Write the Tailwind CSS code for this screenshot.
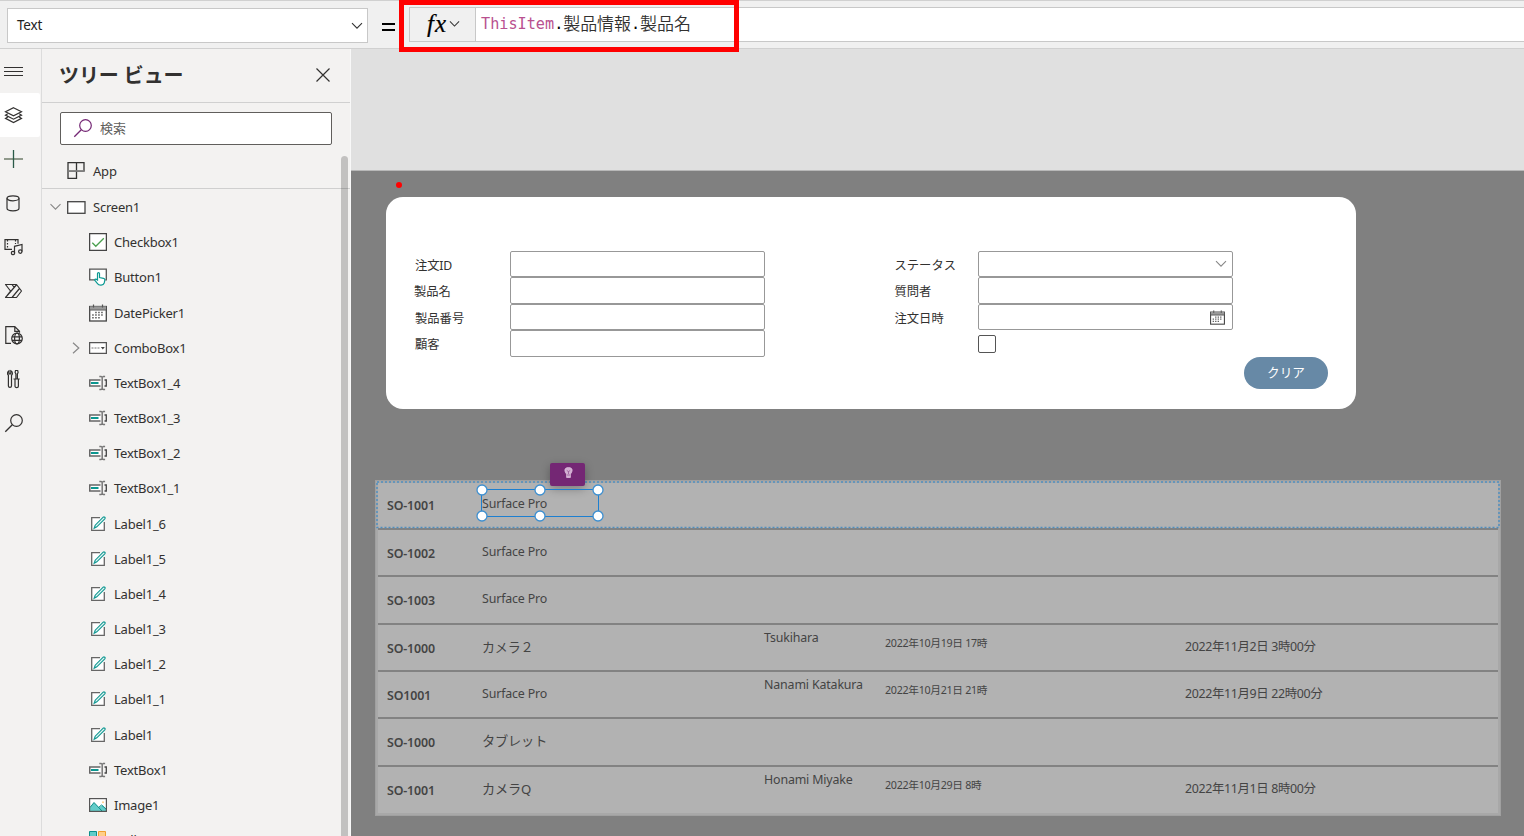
<!DOCTYPE html>
<html lang="ja">
<head>
<meta charset="utf-8">
<title>Power Apps Studio</title>
<script src="https://cdn.jsdelivr.net/npm/@tailwindcss/browser@4"></script>
</head>
<body class="w-[1524px] h-[836px] overflow-hidden bg-[#808080] font-['Noto_Sans','Noto_Sans_CJK_JP',sans-serif] text-[#323130] relative flex flex-col">

<svg class="hidden" xmlns="http://www.w3.org/2000/svg">
  <symbol id="i-textbox" viewBox="0 0 18 16">
    <path d="M11.500 5H.75v6H11.500" fill="#fff" stroke="#666" stroke-width="1.500"/>
    <rect x="2" y="7" width="7.500" height="2" fill="#0b968f"/>
    <path d="M15.500 5h1.800v6h-1.800" fill="none" stroke="#444" stroke-width="1.300"/>
    <path d="M10.300 1.500h1.700l1.200.9 1.200-.9h1.700M10.300 14.500h1.700l1.200-.9 1.200.9h1.700M13.200 2v12" fill="none" stroke="#777" stroke-width="1.500"/>
  </symbol>
  <symbol id="i-label" viewBox="0 0 18 16">
    <path d="M11 1.800H2.700v12.500h12.600V6.500" fill="#fff"/>
    <path d="M11 1.700H2.700v12.600h12.600V6" fill="none" stroke="#666" stroke-width="1.300"/>
    <path d="M5.200 12.200l1-3 8-8c1-.9 2.500.6 1.600 1.600l-8 8z" fill="#e6f5f4" stroke="#159a94" stroke-width="1.200"/>
  </symbol>
  <symbol id="i-calendar" viewBox="0 0 18 18">
    <rect x=".7" y="2.500" width="16.600" height="14.500" fill="#fff" stroke="#444" stroke-width="1.300"/>
    <path d="M1 2.300h16v3.500H1z" fill="#999"/><path d="M1 6h16M4.500.5v3M13.500.5v3" stroke="#555" stroke-width="1.200"/>
    <path d="M6.200 8.500h9M3.200 11h12M3.200 13.700h9" stroke="#555" stroke-width="1.500" stroke-dasharray="1.500 1.500"/>
  </symbol>
  <symbol id="i-search" viewBox="0 0 20 20">
    <circle cx="12.500" cy="7.500" r="5.800" fill="none" stroke="currentColor" stroke-width="1.200"/>
    <path d="M8.300 11.700L1.300 18.700" stroke="currentColor" stroke-width="1.300"/>
  </symbol>
  <symbol id="i-down" viewBox="0 0 12 8">
    <path d="M1 1.200l5 5 5-5" fill="none" stroke="currentColor" stroke-width="1.100"/>
  </symbol>
</svg>

<!-- Formula bar -->
<header class="h-[49px] shrink-0 bg-[#f0f0f0] border-y border-[#d0d0d0] flex items-start pt-[6px]">
  <div class="ml-[7px] mt-px w-[361px] h-[35px] bg-white border border-[#c8c8c8] flex items-center justify-between pl-[9px] pr-[4px] text-[13.500px] text-[#222]">
    <span class="tracking-[-0.2px]">Text</span>
    <svg class="w-[12px] h-[8px] text-[#333]"><use href="#i-down"/></svg>
  </div>
  <div class="w-[41px] h-[35px] flex items-center justify-center">
    <div class="w-[13px] h-[8px] mt-[4px] border-y-2 border-black"></div>
  </div>
  <div class="w-[66px] h-[35px] border border-r-0 border-[#c8c8c8] flex items-center pl-[17px] gap-[5px]">
    <span class="font-['Liberation_Serif',serif] italic text-[25px] leading-none text-black w-[19px] -mt-[3px] tracking-[1px] [-webkit-text-stroke:0.2px_black]">fx</span>
    <svg class="w-[11px] h-[8px] text-[#333] ml-[-2px] -mt-[2px]"><use href="#i-down"/></svg>
  </div>
  <div class="flex-1 h-[35px] border border-r-0 border-[#c8c8c8] bg-white flex items-center pl-[5px] pb-px whitespace-pre text-[15.200px]">
    <span class="font-['DejaVu_Sans_Mono',monospace] text-[#b9508f]">ThisItem</span><span class="font-['DejaVu_Sans_Mono',monospace] text-black">.</span><span class="text-[17px] leading-none -mt-[4px] tracking-[-0.100px] font-['Noto_Sans_CJK_JP',sans-serif] font-[350]">製品情報</span><span class="font-['DejaVu_Sans_Mono',monospace] text-black">.</span><span class="text-[17px] leading-none -mt-[4px] tracking-[-0.100px] font-['Noto_Sans_CJK_JP',sans-serif] font-[350]">製品名</span>
  </div>
</header>

<div class="flex flex-1 min-h-0">
  <!-- Navigation rail -->
  <nav class="w-[42px] shrink-0 bg-[#f3f2f1] border-r border-[#dcdcdc] text-[#323130]">
    <div class="w-[40px] h-[44px] flex items-center pl-[4px]"><svg width="19" height="14" viewBox="0 0 19 14" stroke="currentColor"><path d="M0 3.500h19M0 7.500h19M0 11.500h19"/></svg></div>
    <div class="w-[40px] h-[44px] flex items-center pl-[4px] bg-white rounded-r-xs"><svg width="19" height="18" viewBox="0 0 19 18" fill="none" stroke="currentColor" stroke-width="1.200"><path d="M9.500 1.700L17.500 5.800 9.500 9.900 1.500 5.800z"/><path d="M3.800 7.700L1.500 9.100l8 4.100 8-4.100-2.300-1.400M3.800 10.900L1.500 12.400l8 4.100 8-4.100-2.300-1.500"/></svg></div>
    <div class="w-[40px] h-[44px] flex items-center pl-[4px]"><svg width="19" height="18" viewBox="0 0 19 18" stroke-width="1.300"><path d="M0 9h19" stroke="#5a6a55"/><path d="M9.500 0v18" stroke="#2a5a48"/></svg></div>
    <div class="w-[40px] h-[44px] flex items-center pl-[6px]"><svg width="14" height="17" viewBox="0 0 14 17" fill="none" stroke="currentColor" stroke-width="1.200"><ellipse cx="7" cy="3.300" rx="6" ry="2.500"/><path d="M1 3.300v10c0 3.400 12 3.400 12 0v-10"/></svg></div>
    <div class="w-[40px] h-[44px] flex items-center pl-[4px]"><svg width="20" height="18" viewBox="0 0 20 18" fill="none" stroke="currentColor" stroke-width="1.200"><path d="M8 11.300H1V1.700h13v4"/><path d="M3.500 2v9M11.500 2v4" stroke-dasharray="1.500 1.500"/><path d="M10.500 15V8.300l7.500-1.800V13.500"/><circle cx="9" cy="15" r="1.700"/><circle cx="16.300" cy="13.600" r="1.700"/></svg></div>
    <div class="w-[40px] h-[44px] flex items-center pl-[4px]"><svg width="19" height="16" viewBox="0 0 19 16" fill="none" stroke="currentColor" stroke-width="1.200" stroke-linejoin="round"><path d="M1.500 1.500h11L17.500 8l-5 6.500h-11L6.500 8zM8 1.500l2.500 3.300M12.300 2L1.500 14.500M15.500 5.500L8 14.500"/></svg></div>
    <div class="w-[40px] h-[44px] flex items-center pl-[5px]"><svg width="18" height="20" viewBox="0 0 18 20" fill="none" stroke="currentColor" stroke-width="1.200"><path d="M6 18.400H.8V1.600h9l4.700 4.700v1.500M9.800 1.600v4.700h4.700"/><circle cx="12" cy="13.500" r="5.300"/><ellipse cx="12" cy="13.500" rx="2.400" ry="5.300"/><path d="M7 11.800h10M7 15.300h10"/></svg></div>
    <div class="w-[40px] h-[44px] flex items-center pl-[7px]"><svg width="13" height="20" viewBox="0 0 13 20" fill="none" stroke="currentColor" stroke-width="1.200"><path d="M2 1.800v3h1.800v-3c2 1 2 3.500.7 4.600V17c0 1.900-3.100 1.900-3.100 0V6.400C.1 5.300.1 2.800 2 1.800z"/><path d="M8.500 1.500h2.200l.4 2-.7 1.500V10h1v7.300c0 1.700-3.400 1.700-3.400 0V10h.9V5l-.8-1.500zM6.500 10h6.200"/></svg></div>
    <div class="w-[40px] h-[44px] flex items-center pl-[4px]"><svg class="w-[20px] h-[20px]"><use href="#i-search"/></svg></div>
  </nav>

  <!-- Tree view -->
  <aside class="w-[309px] shrink-0 bg-[#f3f2f1] border-r border-[#f8f8f8] relative overflow-hidden">
    <div class="h-[54px] border-b border-[#d0d0d0] flex items-center justify-between pl-[17px] pr-[19px]">
      <h1 class="text-[20px] font-bold leading-none tracking-[-0.100px]">ツリー ビュー</h1>
      <svg class="-mt-[2px]" width="16" height="16" viewBox="0 0 16 16" stroke="#323130" stroke-width="1.200"><path d="M1.500 1.500l13 13M14.500 1.500l-13 13"/></svg>
    </div>
    <div class="ml-[18px] mt-[9px] w-[272px] h-[33px] bg-white border border-[#605e5c] rounded-[2px] flex items-center pl-[12px] gap-[7px]">
      <svg class="w-[20px] h-[20px] text-[#742774] -mt-[2px]"><use href="#i-search"/></svg>
      <span class="text-[13px] text-[#605e5c]">検索</span>
    </div>
    <div class="h-[44px] border-b border-[#cfcfcf] flex items-center pl-[25px] gap-[8px] text-[13px] pt-[11px]">
      <svg class="-mt-[3px]" width="18" height="17" viewBox="0 0 18 17" fill="none"><path d="M1 .7h16v8.500H1zM1 9v7.300h8.500V.7" stroke="#333" stroke-width="1.300"/><path d="M1 9h16" stroke="#888" stroke-width="1.500"/></svg>
      <span class="tracking-[-0.200px]">App</span>
    </div>
    <ul class="pt-px text-[13px] tracking-[-0.220px] leading-none [&>li]:h-[35.180px] [&>li]:flex [&>li]:items-center [&>li]:pl-[47px] [&>li]:gap-[7px] [&>li>svg]:shrink-0 [&>li>svg]:-mt-px">
      <li class="!pl-[7px]"><svg class="w-[13px] h-[8px] text-[#888]"><use href="#i-down"/></svg><svg class="-ml-[2px]" width="19" height="13" viewBox="0 0 19 13"><rect x=".7" y=".7" width="17.300" height="11.600" fill="#fff" stroke="#444" stroke-width="1.300"/></svg><span>Screen1</span></li>
      <li><svg width="18" height="18" viewBox="0 0 18 18"><rect x=".6" y=".6" width="16.800" height="16.800" fill="#fff" stroke="#444" stroke-width="1.300"/><path d="M3.300 9.800l3.500 3.500 8-8" fill="none" stroke="#4ba04f" stroke-width="1.300"/></svg><span>Checkbox1</span></li>
      <li><svg width="18" height="18" viewBox="0 0 18 18"><path d="M6 11.800H.7V1.200h16.600v10.600h-1" fill="#fff" stroke="#555" stroke-width="1.300"/><path d="M8.500 12V5.500c0-1.300 2-1.300 2 0v4l4 .8c1.200.3 1.500 1 1.300 2l-.6 2.700c-.8 2.700-5.200 2.900-6.700.7l-2.800-3.700c.3-1.300 1.500-1.200 2.800 0z" fill="#fff" stroke="#0b9a93" stroke-width="1.200"/></svg><span>Button1</span></li>
      <li><svg class="w-[18px] h-[18px]"><use href="#i-calendar"/></svg><span>DatePicker1</span></li>
      <li class="!pl-[30px] !gap-[8px]"><svg width="8" height="12" viewBox="0 0 8 12"><path d="M1 .7L6.800 6 1 11.300" fill="none" stroke="#888" stroke-width="1.200"/></svg><svg class="ml-px" width="18" height="12" viewBox="0 0 18 12"><rect x=".6" y=".6" width="16.800" height="10.800" fill="#fff" stroke="#555" stroke-width="1.300"/><path d="M2.500 6h2M5.500 6h2M8.500 6h2" stroke="#777" stroke-width="1.200"/><path d="M11.800 5h4l-2 2.500z" fill="#444"/></svg><span class="-ml-px">ComboBox1</span></li>
      <li><svg class="w-[18px] h-[16px]"><use href="#i-textbox"/></svg><span>TextBox1_4</span></li>
      <li><svg class="w-[18px] h-[16px]"><use href="#i-textbox"/></svg><span>TextBox1_3</span></li>
      <li><svg class="w-[18px] h-[16px]"><use href="#i-textbox"/></svg><span>TextBox1_2</span></li>
      <li><svg class="w-[18px] h-[16px]"><use href="#i-textbox"/></svg><span>TextBox1_1</span></li>
      <li><svg class="w-[18px] h-[16px]"><use href="#i-label"/></svg><span>Label1_6</span></li>
      <li><svg class="w-[18px] h-[16px]"><use href="#i-label"/></svg><span>Label1_5</span></li>
      <li><svg class="w-[18px] h-[16px]"><use href="#i-label"/></svg><span>Label1_4</span></li>
      <li><svg class="w-[18px] h-[16px]"><use href="#i-label"/></svg><span>Label1_3</span></li>
      <li><svg class="w-[18px] h-[16px]"><use href="#i-label"/></svg><span>Label1_2</span></li>
      <li><svg class="w-[18px] h-[16px]"><use href="#i-label"/></svg><span>Label1_1</span></li>
      <li><svg class="w-[18px] h-[16px]"><use href="#i-label"/></svg><span>Label1</span></li>
      <li><svg class="w-[18px] h-[16px]"><use href="#i-textbox"/></svg><span>TextBox1</span></li>
      <li><svg width="18" height="14" viewBox="0 0 18 14"><rect x=".6" y=".6" width="16.800" height="12.800" fill="#fff"/><path d="M1 9.500l4-5 5 5 3.500-2.500L17 10.500V13H1z" fill="#62ccc9"/><path d="M1 9.500l4-5 8 8.500M9.500 9.500l3-2.500 5 4.500" fill="none" stroke="#0b8f8a"/><circle cx="14" cy="4.300" r="1" fill="#ffcf8a"/><rect x=".6" y=".6" width="16.800" height="12.800" fill="none" stroke="#555" stroke-width="1.200"/></svg><span>Image1</span></li>
      <li><svg width="18" height="18" viewBox="0 0 18 18" stroke-width="1"><path d="M.5.5h7v7h-7zM10 10h7v7h-7z" fill="#62ccc9" stroke="#0b8f8a"/><path d="M9.500.5h7v7h-7zM.5 10h7v7h-7z" fill="#ffcf8a" stroke="#f0a030"/></svg><span>Gallery1</span></li>
    </ul>
    <div class="absolute right-[2px] top-[107px] w-[7px] h-[700px] rounded-t-full bg-black/20"></div>
  </aside>

  <!-- Canvas -->
  <main class="flex-1 min-w-0 flex flex-col relative">
    <div class="h-[122px] shrink-0 bg-[#e0e0e0] border-b border-[#b8b8b8]"></div>

    <section class="ml-[34.500px] mt-[26px] w-[970px] h-[212.400px] shrink-0 bg-white rounded-[17px] flex pt-[54px] pl-[29.500px] text-[12.300px]">
      <div class="w-[95px] leading-[26.400px] pt-[2px]">
        <div class="h-[26.400px] tracking-[-0.150px]">注文ID</div>
        <div class="h-[26.400px] -ml-px">製品名</div>
        <div class="h-[26.400px]">製品番号</div>
        <div class="h-[26.400px]">顧客</div>
      </div>
      <div class="w-[254.500px] [&>div]:h-[26.400px] [&>div]:border [&>div]:border-[#989898] [&>div]:rounded-[2px]">
        <div></div>
        <div></div>
        <div></div>
        <div></div>
      </div>
      <div class="ml-[130px] w-[83.500px] leading-[26.400px] pt-[2px]">
        <div class="h-[26.400px]">ステータス</div>
        <div class="h-[26.400px]">質問者</div>
        <div class="h-[26.400px]">注文日時</div>
      </div>
      <div class="w-[254.500px]">
        <div class="h-[26.400px] border border-[#989898] rounded-[2px] flex items-center justify-end pr-[5px]"><svg class="w-[12px] h-[8px] text-[#888]"><use href="#i-down"/></svg></div>
        <div class="h-[26.400px] border border-[#989898] rounded-[2px]"></div>
        <div class="h-[26.400px] border border-[#989898] rounded-[2px] flex items-center justify-end pr-[7px]"><svg class="w-[15px] h-[15px] mt-px"><use href="#i-calendar"/></svg></div>
        <div class="mt-[5px] w-[18px] h-[18px] border border-[#555] rounded-[2px]"></div>
      </div>
      <button class="ml-[11.500px] mt-[106px] w-[84px] h-[32px] rounded-full bg-[#6789a6] text-white text-[12.600px]">クリア</button>
    </section>

    <section class="ml-[24px] mt-[70.600px] w-[1126px] h-[336px] shrink-0 bg-[#b2b2b2] border border-[#a0a0a0] text-[12.400px] text-[#444] shadow-[inset_0_0_0_2px_#a8a8a8] px-[2px] pt-[1.500px] leading-[16px] tracking-[-0.150px]
      [&>div]:h-[47.400px] [&>div]:border-b-2 [&>div]:border-[#828282] [&>div]:flex [&>div]:items-start [&>div]:pl-[9px] [&>div>b]:w-[95px] [&>div>b]:pt-[16px] [&>div>b]:font-semibold [&>div>span:nth-of-type(1)]:w-[282px] [&>div>span:nth-of-type(1)]:pt-[14px] [&>div>span:nth-of-type(2)]:w-[121px] [&>div>span:nth-of-type(2)]:pt-[5px] [&>div>span:nth-of-type(3)]:w-[300px] [&>div>span:nth-of-type(3)]:pt-[10px] [&>div>span:nth-of-type(3)]:tracking-[-0.300px] [&>div>span:nth-of-type(4)]:pt-[14px] [&>div>span:nth-of-type(4)]:tracking-[-0.350px]">
      <div><b>SO-1001</b><span>Surface Pro</span></div>
      <div><b>SO-1002</b><span>Surface Pro</span></div>
      <div><b>SO-1003</b><span>Surface Pro</span></div>
      <div><b>SO-1000</b><span class="text-[13px]">カメラ２</span><span>Tsukihara</span><span class="text-[10.700px]">2022年10月19日 17時</span><span>2022年11月2日 3時00分</span></div>
      <div><b>SO1001</b><span>Surface Pro</span><span>Nanami Katakura</span><span class="text-[10.700px]">2022年10月21日 21時</span><span>2022年11月9日 22時00分</span></div>
      <div><b>SO-1000</b><span class="text-[13.200px]">タブレット</span></div>
      <div class="!border-b-0"><b>SO-1001</b><span class="text-[13.200px]">カメラQ</span><span>Honami Miyake</span><span class="text-[10.700px]">2022年10月29日 8時</span><span>2022年11月1日 8時00分</span></div>
    </section>

    <!-- Selection overlay: gallery template, selected label, handles, suggestion badge -->
    <div class="absolute left-[45px] top-[133px] w-[6px] h-[6px] rounded-full bg-[#f00]"></div>
    <svg class="absolute left-[25px] top-[432px]" width="1124" height="48" viewBox="0 0 1124 48"><rect x="1" y="1" width="1122" height="45.500" fill="none" stroke="#4f8fc0" stroke-width="1.500" stroke-dasharray="2 2"/></svg>
    <div class="absolute left-[199px] top-[414px] w-[35px] h-[23px] rounded-[2px] bg-[#742774] shadow-[0_3px_10px_rgba(0,0,0,.3)] flex justify-center pt-[4px] pl-[2px]">
      <svg width="9" height="12" viewBox="0 0 9 12"><path d="M4.500.6C-.4.600.400 4.500 2.600 7v3.500h3.800V7C8.600 4.500 9.400.600 4.500.600z" fill="#d3b0d3" stroke="#d9bcd9" stroke-width=".8"/><path d="M2.800 3.500l1.700 1 1.700-1M4.500 4.500v2.500M2.800 8h3.400" fill="none" stroke="#8d4a8d" stroke-width=".7"/></svg>
    </div>
    <svg class="absolute left-[124px] top-[434px]" width="130" height="40" viewBox="0 0 130 40" fill="none" stroke="#1d7fd0">
      <rect x="6.500" y="6.500" width="117" height="27"/>
      <g fill="#fff" stroke="#3d8fd0" stroke-width="1.300"><circle cx="7" cy="7" r="5"/><circle cx="65" cy="7" r="5"/><circle cx="123" cy="7" r="5"/><circle cx="7" cy="33" r="5"/><circle cx="65" cy="33" r="5"/><circle cx="123" cy="33" r="5"/></g>
    </svg>
  </main>
</div>

<!-- Highlight around the formula -->
<div class="absolute left-[399px] top-0 w-[340px] h-[52px] border-[5px] border-[#f00]"></div>
</body>
</html>
